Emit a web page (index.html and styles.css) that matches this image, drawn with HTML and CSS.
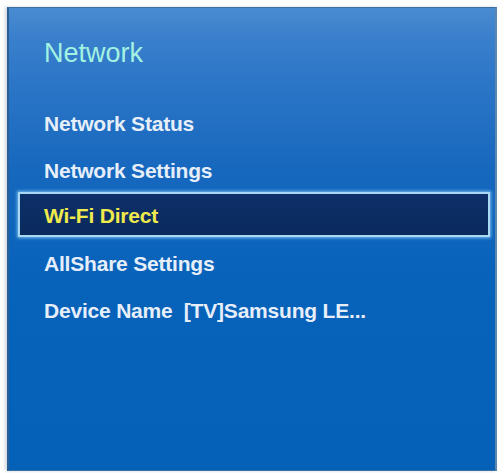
FILE: index.html
```html
<!DOCTYPE html>
<html>
<head>
<meta charset="utf-8">
<link rel="stylesheet" href="styles.css">
</head>
<body>
<div class="panel">
  <div class="title">Network</div>
  <ul class="menu">
    <li class="item">Network Status</li>
    <li class="item">Network Settings</li>
    <li class="item selected">Wi-Fi Direct</li>
    <li class="item">AllShare Settings</li>
    <li class="item">Device Name&nbsp;&nbsp;[TV]Samsung LE...</li>
  </ul>
</div>
</body>
</html>
```
FILE: styles.css
```css
html, body {
  margin: 0;
  padding: 0;
  background: #ffffff;
}
body {
  width: 504px;
  height: 473px;
  overflow: hidden;
  font-family: "Liberation Sans", Arial, sans-serif;
}
.panel {
  box-sizing: border-box;
  margin: 7px 0 0 7px;
  width: 490px;
  height: 464px;
  border: 1px solid #3f6f9e;
  border-left: 2px solid #2c5f93;
  border-right: 2px solid #5a86b0;
  background: linear-gradient(to bottom, #4a8cd2 0%, #3a80cc 6%, #2a74c6 18%, #1668be 35%, #0762ba 60%, #0560b8 100%);
  box-shadow: -2px 0 3px rgba(120,140,160,0.35);
  padding-top: 32px;
}
.title {
  font-size: 27px;
  line-height: 27px;
  color: #a3f2e2;
  padding-left: 35px;
  margin-bottom: 33px;
}
.menu {
  list-style: none;
  margin: 0;
  padding: 0 5px 0 9px;
}
.item {
  box-sizing: border-box;
  height: 47px;
  line-height: 43px;
  border: 2px solid transparent;
  padding-left: 24px;
  font-size: 21px;
  font-weight: bold;
  color: #e6eff9;
  letter-spacing: -0.2px;
  white-space: nowrap;
}
.item.selected {
  height: 45px;
  line-height: 38px;
  padding-top: 3px;
  margin-top: -2px;
  margin-bottom: 3px;
  color: #f0ea4c;
  background: linear-gradient(to bottom, #0d3069 0%, #0a2a5c 100%);
  border-color: #a8d8f4;
  box-shadow: 0 0 3px 1px rgba(160,220,255,0.7);
}
```
